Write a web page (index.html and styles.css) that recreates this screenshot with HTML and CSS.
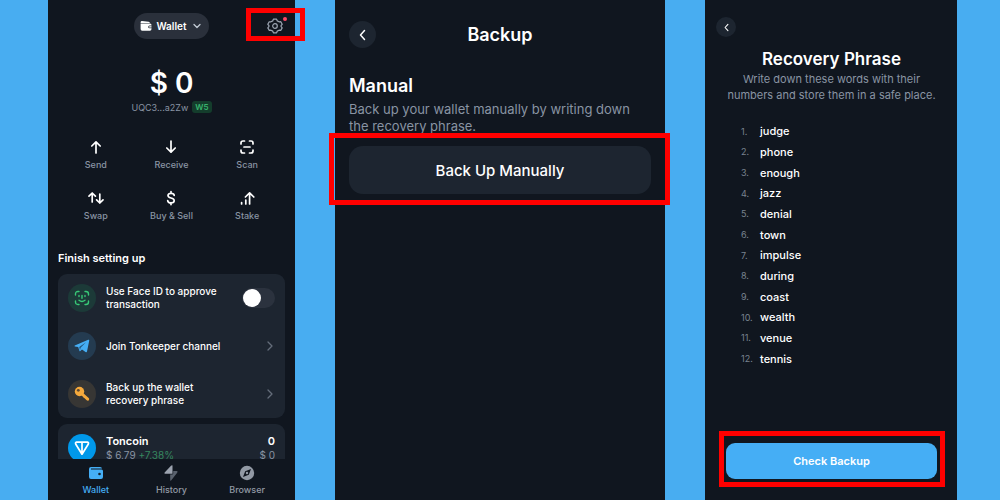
FILE: index.html
```html
<!DOCTYPE html>
<html lang="en">
<head>
  <meta charset="UTF-8">
  <meta name="viewport" content="width=device-width, initial-scale=1.0">
  <title>Wallet Backup</title>
  <link rel="stylesheet" href="styles.css">
</head>
<body>
  <main class="screens">
    <section class="phone wallet">
      <header class="wallet-header">
        <button type="button" class="wallet-select">
          <svg width="12" height="12" viewBox="0 0 12 12"><path d="M.6 3V2.2Q.7 1 2 1.1L8.6 1.7Q9.7 1.8 9.8 3Z" fill="#fff"/><path d="M.6 3.5H10Q11.5 3.6 11.5 5V5.6H9.5Q8.2 5.8 8.2 7T9.5 8.2H11.5V9Q11.5 10.7 9.9 10.7H2.2Q.6 10.7.6 9Z" fill="#fff"/><path d="M9.7 6.3H11.5V7.6H9.7Q9 7.5 9 7T9.7 6.3Z" fill="#fff"/></svg>
          Wallet
          <svg class="chevron" width="8" height="6" viewBox="0 0 8 6"><path d="M1 1.5L4 4.5L7 1.5" /></svg>
        </button>
        <button type="button" class="settings" aria-label="Settings">
          <svg width="16" height="16" viewBox="0 0 16 16" fill="none" stroke="#9ca5b2" stroke-width="1.2" stroke-linejoin="round"><path d="M6.4 1.2H9.6L10.3 2.9L12 3.8L13.8 3.7L15.2 6.3L14.1 7.5V8.7L15.2 9.9L13.7 12.4L12 12.2L10.3 13.1L9.6 14.8H6.4L5.7 13.1L4 12.2L2.3 12.4L.8 9.9L1.9 8.7V7.5L.8 6.3L2.2 3.8L4 3.8L5.7 2.9Z"/><circle cx="8" cy="8" r="2.3"/></svg>
          <span class="dot"></span>
          <span class="highlight"></span>
        </button>
      </header>

      <h1 class="balance">$ 0</h1>
      <p class="address">UQC3...a2Zw <span class="badge">W5</span></p>

      <nav class="actions">
        <a href="#"><svg viewBox="0 0 16 16"><path d="M8 14V2.8M3.8 7L8 2.8L12.2 7"/></svg>Send</a>
        <a href="#"><svg viewBox="0 0 16 16"><path d="M8 2V13.2M3.8 9L8 13.2L12.2 9"/></svg>Receive</a>
        <a href="#"><svg viewBox="0 0 16 16"><path d="M2 5V4Q2 2 4 2H5.5M10.5 2H12Q14 2 14 4V5M14 11V12Q14 14 12 14H10.5M5.5 14H4Q2 14 2 12V11M5 8H11"/></svg>Scan</a>
        <a href="#"><svg viewBox="0 0 16 16"><path d="M4.2 12V3M1 6.2L4.2 3L7.4 6.2M11.8 4V13M8.6 9.8L11.8 13L15 9.8"/></svg>Swap</a>
        <a href="#"><svg viewBox="0 0 16 16"><path d="M11.2 5.4Q11 3.3 8 3.3Q5 3.3 5 5.5Q5 7.2 8 8Q11.2 8.8 11.2 10.7Q11.2 12.9 8 12.9Q4.9 12.9 4.7 10.6M8 1.6V3.3M8 12.9V14.6"/></svg>Buy &amp; Sell</a>
        <a href="#"><svg viewBox="0 0 16 16"><path d="M10.6 14V2.8M6.4 7L10.6 2.8L14.8 7M6.8 10V14M2.6 12.5V14"/></svg>Stake</a>
      </nav>

      <h2 class="section-title">Finish setting up</h2>
      <div class="card">
        <label class="row" for="faceId">
          <span class="icon green"><svg width="16" height="16" viewBox="0 0 16 16" fill="none" stroke="#38c977" stroke-width="1.4" stroke-linecap="round"><path d="M1.5 5V4Q1.5 1.5 4 1.5H5M11 1.5H12Q14.5 1.5 14.5 4V5M14.5 11V12Q14.5 14.5 12 14.5H11M5 14.5H4Q1.5 14.5 1.5 12V11M5 5.5V6.5M11 5.5V6.5M8 5.5V8.3M5 10.2Q8 12.7 11 10.2"/></svg></span>
          <span class="row-text">Use Face ID to approve transaction</span>
          <input type="checkbox" id="faceId" class="switch">
        </label>
        <a href="#" class="row">
          <span class="icon blue"><svg width="16" height="16" viewBox="0 0 16 16"><path d="M.8 7.5L14.2 1.8Q15.5 1.4 15.2 2.8L13 13.5Q12.7 14.8 11.5 14L8 11.4L6.3 13Q5.7 13.6 5.4 12.7L4.2 9.1L.9 8.4Q.1 8 .8 7.5Z" fill="#45aef5"/><path d="M5.2 9L12 4.3L6.6 9.7L6 12.2Z" fill="#23557b"/></svg></span>
          <span class="row-text">Join Tonkeeper channel</span>
          <svg class="arrow" width="6" height="10" viewBox="0 0 6 10"><path d="M1 1L5 5L1 9"/></svg>
        </a>
        <a href="#" class="row">
          <span class="icon orange"><svg width="16" height="16" viewBox="0 0 16 16"><path d="M7.5 7.5L13.7 13.2" stroke="#f5a93c" stroke-width="3" stroke-linecap="round"/><path d="M9.5 11.2L11 10" stroke="#f5a93c" stroke-width="2"/><circle cx="5.5" cy="5.5" r="4.7" fill="#f5a93c"/><circle cx="4.3" cy="4.3" r="1.4" fill="#5b4832"/></svg></span>
          <span class="row-text">Back up the wallet recovery phrase</span>
          <svg class="arrow" width="6" height="10" viewBox="0 0 6 10"><path d="M1 1L5 5L1 9"/></svg>
        </a>
      </div>

      <div class="card coin">
        <span class="icon ton"><svg width="16" height="16" viewBox="0 0 16 16" fill="none" stroke="#fff" stroke-width="1.7" stroke-linejoin="round"><path d="M2.5 2.2H13.5Q15 2.5 14.2 4.3L8 14.2L1.8 4.3Q1 2.5 2.5 2.2ZM8 2.2V14"/></svg></span>
        <div class="coin-name">
          <strong>Toncoin</strong>
          <span>$ 6.79 <em>+7.38%</em></span>
        </div>
        <div class="coin-amount">
          <strong>0</strong>
          <span>$ 0</span>
        </div>
      </div>

      <nav class="tabs">
        <a href="#" class="active"><svg viewBox="0 0 16 16"><path d="M1 4Q1 2 3 2H12Q14 2 14 3.5H3V4.5H13.5Q15 4.5 15 6V12Q15 14 13 14H3Q1 14 1 12Z" fill="#45aef5"/><circle cx="11.5" cy="9" r="1.3" fill="#15202c"/></svg>Wallet</a>
        <a href="#"><svg viewBox="0 0 16 16"><path d="M9.5.5V8.8H2.2Q.8 8.7 1.7 7.5L8 .8Q9 0 9.5.5Z" fill="#9ca3af"/><path d="M7.2 15.5V9.5H9.5L10.2 8.8V6H13.8Q15.2 6.2 14.2 7.7L8.5 15Q7.7 16 7.2 15.5Z" fill="#59616d"/></svg>History</a>
        <a href="#"><svg viewBox="0 0 16 16"><circle cx="8" cy="8" r="7.2" fill="#9299a4"/><path d="M12 4L9.8 9.8L4 12L6.2 6.2Z" fill="#10161f"/><circle cx="8" cy="8" r="1.2" fill="#9299a4"/></svg>Browser</a>
      </nav>
    </section>

    <section class="phone backup">
      <header class="backup-header">
        <button type="button" class="back" aria-label="Back"><svg width="7" height="12" viewBox="0 0 7 12"><path d="M5.5 1.5L1.5 6L5.5 10.5"/></svg></button>
        <h1>Backup</h1>
      </header>
      <h2>Manual</h2>
      <p class="hint">Back up your wallet manually by writing down the recovery phrase.</p>
      <button type="button" class="btn secondary">Back Up Manually<span class="highlight"></span></button>
    </section>

    <section class="phone recovery">
      <button type="button" class="back small" aria-label="Back"><svg width="5" height="9" viewBox="0 0 7 12"><path d="M5.5 1.5L1.5 6L5.5 10.5"/></svg></button>
      <h1>Recovery Phrase</h1>
      <p class="hint">Write down these words with their numbers and store them in a safe place.</p>
      <ol class="words">
        <li><span>1.</span>judge</li>
        <li><span>2.</span>phone</li>
        <li><span>3.</span>enough</li>
        <li><span>4.</span>jazz</li>
        <li><span>5.</span>denial</li>
        <li><span>6.</span>town</li>
        <li><span>7.</span>impulse</li>
        <li><span>8.</span>during</li>
        <li><span>9.</span>coast</li>
        <li><span>10.</span>wealth</li>
        <li><span>11.</span>venue</li>
        <li><span>12.</span>tennis</li>
      </ol>
      <button type="button" class="btn primary">Check Backup<span class="highlight"></span></button>
    </section>
  </main>
</body>
</html>
```
FILE: styles.css
```css
* {
  box-sizing: border-box;
}
body {
  margin: 0;
  background: #48adf1;
  color: #fff;
  font-family: Inter, "Open Sans", sans-serif;
}
h1, h2, p, ol {
  margin: 0;
  padding: 0;
}
button {
  position: relative;
  border: none;
  color: inherit;
  font-family: inherit;
  cursor: pointer;
}
a {
  color: inherit;
  text-decoration: none;
}
svg {
  display: block;
  flex-shrink: 0;
}
.screens {
  display: grid;
  grid-template-columns: 247fr 330fr 252fr;
  gap: 40px;
  height: 100vh;
  min-height: 500px;
  padding: 0 43px 0 48px;
}
.phone {
  display: flex;
  flex-direction: column;
  min-width: 0;
  min-height: 0;
  background: #10161f;
}
.highlight {
  position: absolute;
  border: 5px solid #f00;
  pointer-events: none;
}

/* wallet */
.wallet {
  padding: 0 10px;
}
.wallet-header {
  display: grid;
  grid-template-columns: 1fr auto 1fr;
  align-items: center;
  padding-top: 13px;
}
.wallet-select {
  grid-column: 2;
  display: flex;
  align-items: center;
  gap: 4px;
  height: 26px;
  padding: 0 8px 0 6px;
  border-radius: 13px;
  background: #2a303b;
  font-size: 10px;
  font-weight: 600;
}
.chevron {
  margin-left: 2px;
}
.chevron path, .arrow path, .back path {
  fill: none;
  stroke: #c2cad4;
  stroke-width: 1.3;
  stroke-linecap: round;
  stroke-linejoin: round;
}
.settings {
  justify-self: end;
  margin-right: 2px;
  padding: 0;
  background: none;
}
.settings .dot {
  position: absolute;
  top: -1px;
  right: -4px;
  width: 4px;
  height: 4px;
  border-radius: 50%;
  background: #ff4766;
}
.settings .highlight {
  inset: -10px -22px -7px -21px;
}
.balance {
  margin-top: 26px;
  font-size: 28px;
  font-weight: 600;
  line-height: 36px;
  text-align: center;
}
.address {
  display: flex;
  justify-content: center;
  align-items: center;
  gap: 4px;
  height: 14px;
  color: #8994a3;
  font-size: 9px;
}
.badge {
  padding: 0 3px;
  border-radius: 3px;
  background: #143d2c;
  color: #38b56e;
  font-size: 8px;
  font-weight: 600;
  line-height: 12px;
}
.actions {
  display: grid;
  grid-template-columns: repeat(3, 1fr);
  row-gap: 20px;
  margin-top: 26px;
}
.actions a {
  display: flex;
  flex-direction: column;
  align-items: center;
  gap: 5px;
  color: #8994a3;
  font-size: 9px;
  font-weight: 500;
  line-height: 10px;
}
.actions svg {
  width: 16px;
  height: 16px;
  fill: none;
  stroke: #fff;
  stroke-width: 1.7;
  stroke-linecap: round;
  stroke-linejoin: round;
}
.section-title {
  margin: 29px 0 8px;
  font-size: 11px;
  font-weight: 600;
  line-height: 16px;
}
.card {
  flex-shrink: 0;
  border-radius: 9px;
  background: #1d2530;
}
.row {
  display: flex;
  align-items: center;
  gap: 10px;
  height: 48px;
  padding: 0 10px;
  font-size: 10px;
  font-weight: 500;
  line-height: 13px;
}
.row-text {
  flex: 1;
  max-width: 115px;
  margin-right: auto;
}
.icon {
  display: flex;
  flex-shrink: 0;
  align-items: center;
  justify-content: center;
  width: 28px;
  height: 28px;
  border-radius: 50%;
}
.green {
  background: #1c3a38;
}
.blue {
  background: #243b50;
}
.orange {
  background: #373634;
}
.ton {
  background: #0098ea;
}
.switch {
  appearance: none;
  display: flex;
  width: 33px;
  height: 20px;
  margin: 0;
  padding: 1px;
  border-radius: 10px;
  background: #2b323e;
}
.switch::before {
  content: "";
  width: 18px;
  height: 18px;
  border-radius: 50%;
  background: #fff;
}
.switch:checked {
  justify-content: flex-end;
  background: #45aef5;
}
.arrow {
  margin-right: 2px;
}
.arrow path {
  stroke: #646d7a;
}
.coin {
  display: flex;
  gap: 10px;
  margin-top: 6px;
  padding: 10px;
}
.coin-name, .coin-amount {
  display: flex;
  flex-direction: column;
  font-size: 10px;
  line-height: 14px;
  color: #8994a3;
}
.coin-amount {
  margin-left: auto;
  text-align: right;
}
.coin strong {
  color: #fff;
  font-size: 11px;
  font-weight: 600;
}
.coin em {
  color: #36875f;
  font-style: normal;
}
.tabs {
  position: sticky;
  bottom: 0;
  display: grid;
  grid-template-columns: repeat(3, 1fr);
  flex-shrink: 0;
  height: 41px;
  margin: auto -10px 0;
  padding: 6px 10px 0;
  background: #10161f;
}
.tabs a {
  display: flex;
  flex-direction: column;
  align-items: center;
  gap: 3px;
  color: #9299a4;
  font-size: 9px;
  font-weight: 500;
  line-height: 12px;
}
.tabs svg {
  width: 16px;
  height: 16px;
}
.tabs .active {
  color: #45aef5;
}

/* backup */
.backup {
  padding: 21px 14px;
}
.back {
  display: flex;
  align-items: center;
  justify-content: center;
  width: 27px;
  height: 27px;
  padding: 0;
  border-radius: 50%;
  background: #1d2530;
}
.back path {
  stroke: #fff;
  stroke-width: 1.5;
}
.backup-header {
  display: grid;
  grid-template-columns: 27px 1fr 27px;
  align-items: center;
  text-align: center;
}
.phone h1, .backup h2 {
  font-weight: 600;
}
.backup h1, .backup h2 {
  font-size: 18px;
  line-height: 24px;
}
.backup h2 {
  margin-top: 26px;
}
.hint {
  color: #8994a3;
}
.backup .hint {
  margin-top: 3px;
  font-size: 13px;
  line-height: 17px;
}
.btn {
  flex-shrink: 0;
  font-weight: 600;
}
.secondary {
  height: 48px;
  margin-top: 11px;
  border-radius: 14px;
  background: #1d2530;
  font-size: 15px;
  font-weight: 500;
}
.secondary .highlight {
  inset: -13px -19px -11px -20px;
}

/* recovery phrase */
.recovery {
  padding: 17px 20px 21px 21px;
}
.back.small {
  width: 20px;
  height: 20px;
  margin-left: -10px;
}
.recovery h1 {
  margin-top: 11px;
  font-size: 17px;
  line-height: 22px;
  text-align: center;
}
.recovery .hint {
  margin-top: 1px;
  font-size: 11px;
  line-height: 16px;
  text-align: center;
}
.words {
  flex: 1;
  display: grid;
  grid-auto-rows: 1fr;
  margin: 18px 15px 74px;
  list-style: none;
  font-size: 11px;
  font-weight: 500;
}
.words li {
  display: flex;
  align-items: center;
}
.words span {
  width: 19px;
  color: #79838f;
  font-size: 9px;
  font-weight: 400;
}
.primary {
  height: 36px;
  border-radius: 9px;
  background: #45aef5;
  font-size: 11px;
}
.primary .highlight {
  inset: -12px -8px -8px -7px;
}
```
